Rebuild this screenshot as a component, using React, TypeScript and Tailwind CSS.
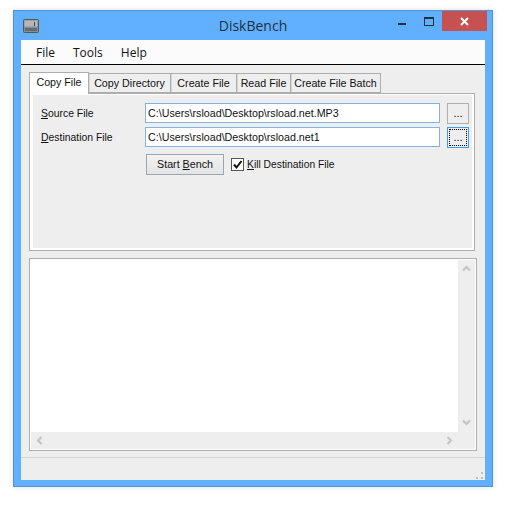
const tabs = [
  { label: "Copy Directory", width: "w-[82px]" },
  { label: "Create File", width: "w-[66px]" },
  { label: "Read File", width: "w-[54px]" },
  { label: "Create File Batch", width: "w-[90px]" },
];

function DiskIcon() {
  return (
    <svg width="16" height="14" viewBox="0 0 16 14" className="mt-[1px]">
      <rect x="0.5" y="0.5" width="15" height="13" rx="1" fill="#8a8e92" stroke="#55585c" />
      <rect x="1.5" y="1.5" width="13" height="6" fill="#b4b8bb" />
      <rect x="11" y="3" width="1" height="4" fill="#44474a" />
      <rect x="2" y="9" width="12" height="3" fill="#66696d" />
    </svg>
  );
}

// Scrollbar arrow, drawn pointing up and rotated per direction
function Arrow({ className }: { className?: string }) {
  return (
    <svg width="9" height="7" viewBox="0 0 9 7" className={className}>
      <path d="M1 5.5 L4.5 2 L8 5.5" fill="none" stroke="#c4c4c4" strokeWidth="2.2" />
    </svg>
  );
}

function BrowseButton({ focused }: { focused?: boolean }) {
  return (
    <button
      className={
        focused
          ? "h-[21px] w-[22px] shrink-0 border border-[#3d9bf0] bg-[#eeeeee] p-[1px]"
          : "h-[21px] w-[22px] shrink-0 border border-[#adadad] bg-[#eeeeee] p-[1px]"
      }
    >
      <span
        className={
          focused
            ? "flex h-full w-full items-center justify-center border border-dotted border-black pb-[1px] text-[11px] leading-none"
            : "flex h-full w-full items-center justify-center pb-[1px] text-[11px] leading-none"
        }
      >
        ...
      </span>
    </button>
  );
}

function FileRow({ hotkey, rest, value, focused }: { hotkey: string; rest: string; value: string; focused?: boolean }) {
  return (
    <div className="flex h-[20px] items-start">
      <div className="w-[104px] shrink-0 pt-[4px] text-[10.4px] leading-[14px]">
        <span className="underline underline-offset-1">{hotkey}</span>
        {rest}
      </div>
      <div className="flex h-[20px] w-[295px] shrink-0 items-center border border-[#7eb4ea] bg-white pl-[2px] text-[10.7px]">{value}</div>
      <div className="ml-[7px]">
        <BrowseButton focused={focused} />
      </div>
    </div>
  );
}

export default function App() {
  return (
    <div className="h-[509px] w-[522px] bg-white pl-[13px] pt-[10px] font-['Liberation_Sans',sans-serif] text-[10.7px] text-[#111]">
      <div className="flex h-[477px] w-[480px] flex-col border border-[#4c93d8] bg-[#60b0ff] shadow-[0_0_6px_rgba(0,0,0,0.12)]">
        {/* Title bar */}
        <div className="relative flex h-[29px] shrink-0 items-start justify-center">
          <div className="absolute left-[9px] top-[7px]">
            <DiskIcon />
          </div>
          <span className="mt-[5px] font-['Open_Sans',sans-serif] text-[14px] leading-[20px] text-[#23303c]">DiskBench</span>
          <div className="absolute right-[5px] top-0 flex items-start">
            <div className="mr-[18px] mt-[12px] h-[2px] w-[8px] bg-[#20303c]" />
            <div className="mr-[8px] mt-[6px] h-[9px] w-[10px] border border-t-[2px] border-[#20303c]" />
            <div className="flex h-[20px] w-[45px] items-center justify-center bg-[#c75050]">
              <svg width="9" height="9" viewBox="0 0 9 9">
                <path d="M1 1 L8 8 M8 1 L1 8" stroke="#fff" strokeWidth="2" />
              </svg>
            </div>
          </div>
        </div>

        {/* Client area */}
        <div className="mx-[7px] flex h-[440px] flex-col bg-[#eeeeee]">
          <div className="flex h-[25px] shrink-0 items-center gap-[18px] border-b border-black bg-[#fbfbfb] pl-[15px] pt-[2px] font-['Open_Sans',sans-serif] text-[12px]">
            <span>File</span>
            <span>Tools</span>
            <span>Help</span>
          </div>

          <div className="flex flex-1 flex-col px-[8px] pt-[6px]">
            {/* Tab strip */}
            <div className="flex h-[22px] items-end">
              <div className="z-10 -mb-[1px] flex h-[22px] w-[60px] items-start justify-center border border-b-0 border-[#adadad] bg-white pt-[2px] leading-[14px]">
                Copy File
              </div>
              {tabs.map((tab) => (
                <div key={tab.label} className={`flex h-[20px] items-center justify-center border border-l-0 border-[#adadad] bg-[#eeeeee] pt-[1px] shadow-[inset_1px_0_0_#d6d6d6] ${tab.width}`}>
                  {tab.label}
                </div>
              ))}
            </div>

            {/* Tab page */}
            <div className="h-[158px] w-[446px] border border-[#adadad] bg-white p-[2px] pl-[3px] pt-[1px]">
              <div className="flex h-full flex-col bg-[#eeeeee] pl-[8px] pt-[8px]">
                <div className="flex flex-col gap-[4px]">
                  <FileRow hotkey="S" rest="ource File" value="C:\Users\rsload\Desktop\rsload.net.MP3" />
                  <FileRow hotkey="D" rest="estination File" value="C:\Users\rsload\Desktop\rsload.net1" focused />
                </div>
                <div className="ml-[105px] mt-[7px] flex items-center">
                  <button className="h-[21px] w-[78px] border border-[#9aa6b0] bg-gradient-to-b from-[#f2f2f2] to-[#e4e4e4]">
                    Start <span className="underline underline-offset-1">B</span>ench
                  </button>
                  <div className="ml-[7px] flex h-[13px] w-[13px] items-center justify-center border border-[#555] bg-white">
                    <svg width="11" height="11" viewBox="0 0 11 11">
                      <path d="M2 5.5 L4.5 8.5 L9.5 2" fill="none" stroke="#111" strokeWidth="2" />
                    </svg>
                  </div>
                  <span className="ml-[3px] text-[10.3px]">
                    <span className="underline underline-offset-1">K</span>ill Destination File
                  </span>
                </div>
              </div>
            </div>

            {/* Log box */}
            <div className="mt-[7px] flex h-[193px] w-[448px] flex-col border border-[#adadad] bg-white p-[1px]">
              <div className="flex min-h-0 flex-1">
                <div className="flex-1 bg-white" />
                <div className="flex w-[17px] flex-col items-center justify-between bg-[#eeeeee] pb-[6px] pt-[5px]">
                  <Arrow />
                  <Arrow className="rotate-180" />
                </div>
              </div>
              <div className="flex h-[17px] shrink-0 items-center justify-between bg-[#eeeeee] pl-[4px] pr-[21px]">
                <Arrow className="-rotate-90" />
                <Arrow className="rotate-90" />
              </div>
            </div>

            {/* Status bar */}
            <div className="relative -mx-[8px] mt-[6px] flex-1 border-t border-[#d4d4d4]">
              <svg width="7" height="7" viewBox="0 0 7 7" className="absolute bottom-[1px] right-[2px]">
                <path d="M5 0h2v2H5zM0 5h2v2H0zM5 5h2v2H5z" fill="#bdbdbd" />
              </svg>
            </div>
          </div>
        </div>
      </div>
    </div>
  );
}
